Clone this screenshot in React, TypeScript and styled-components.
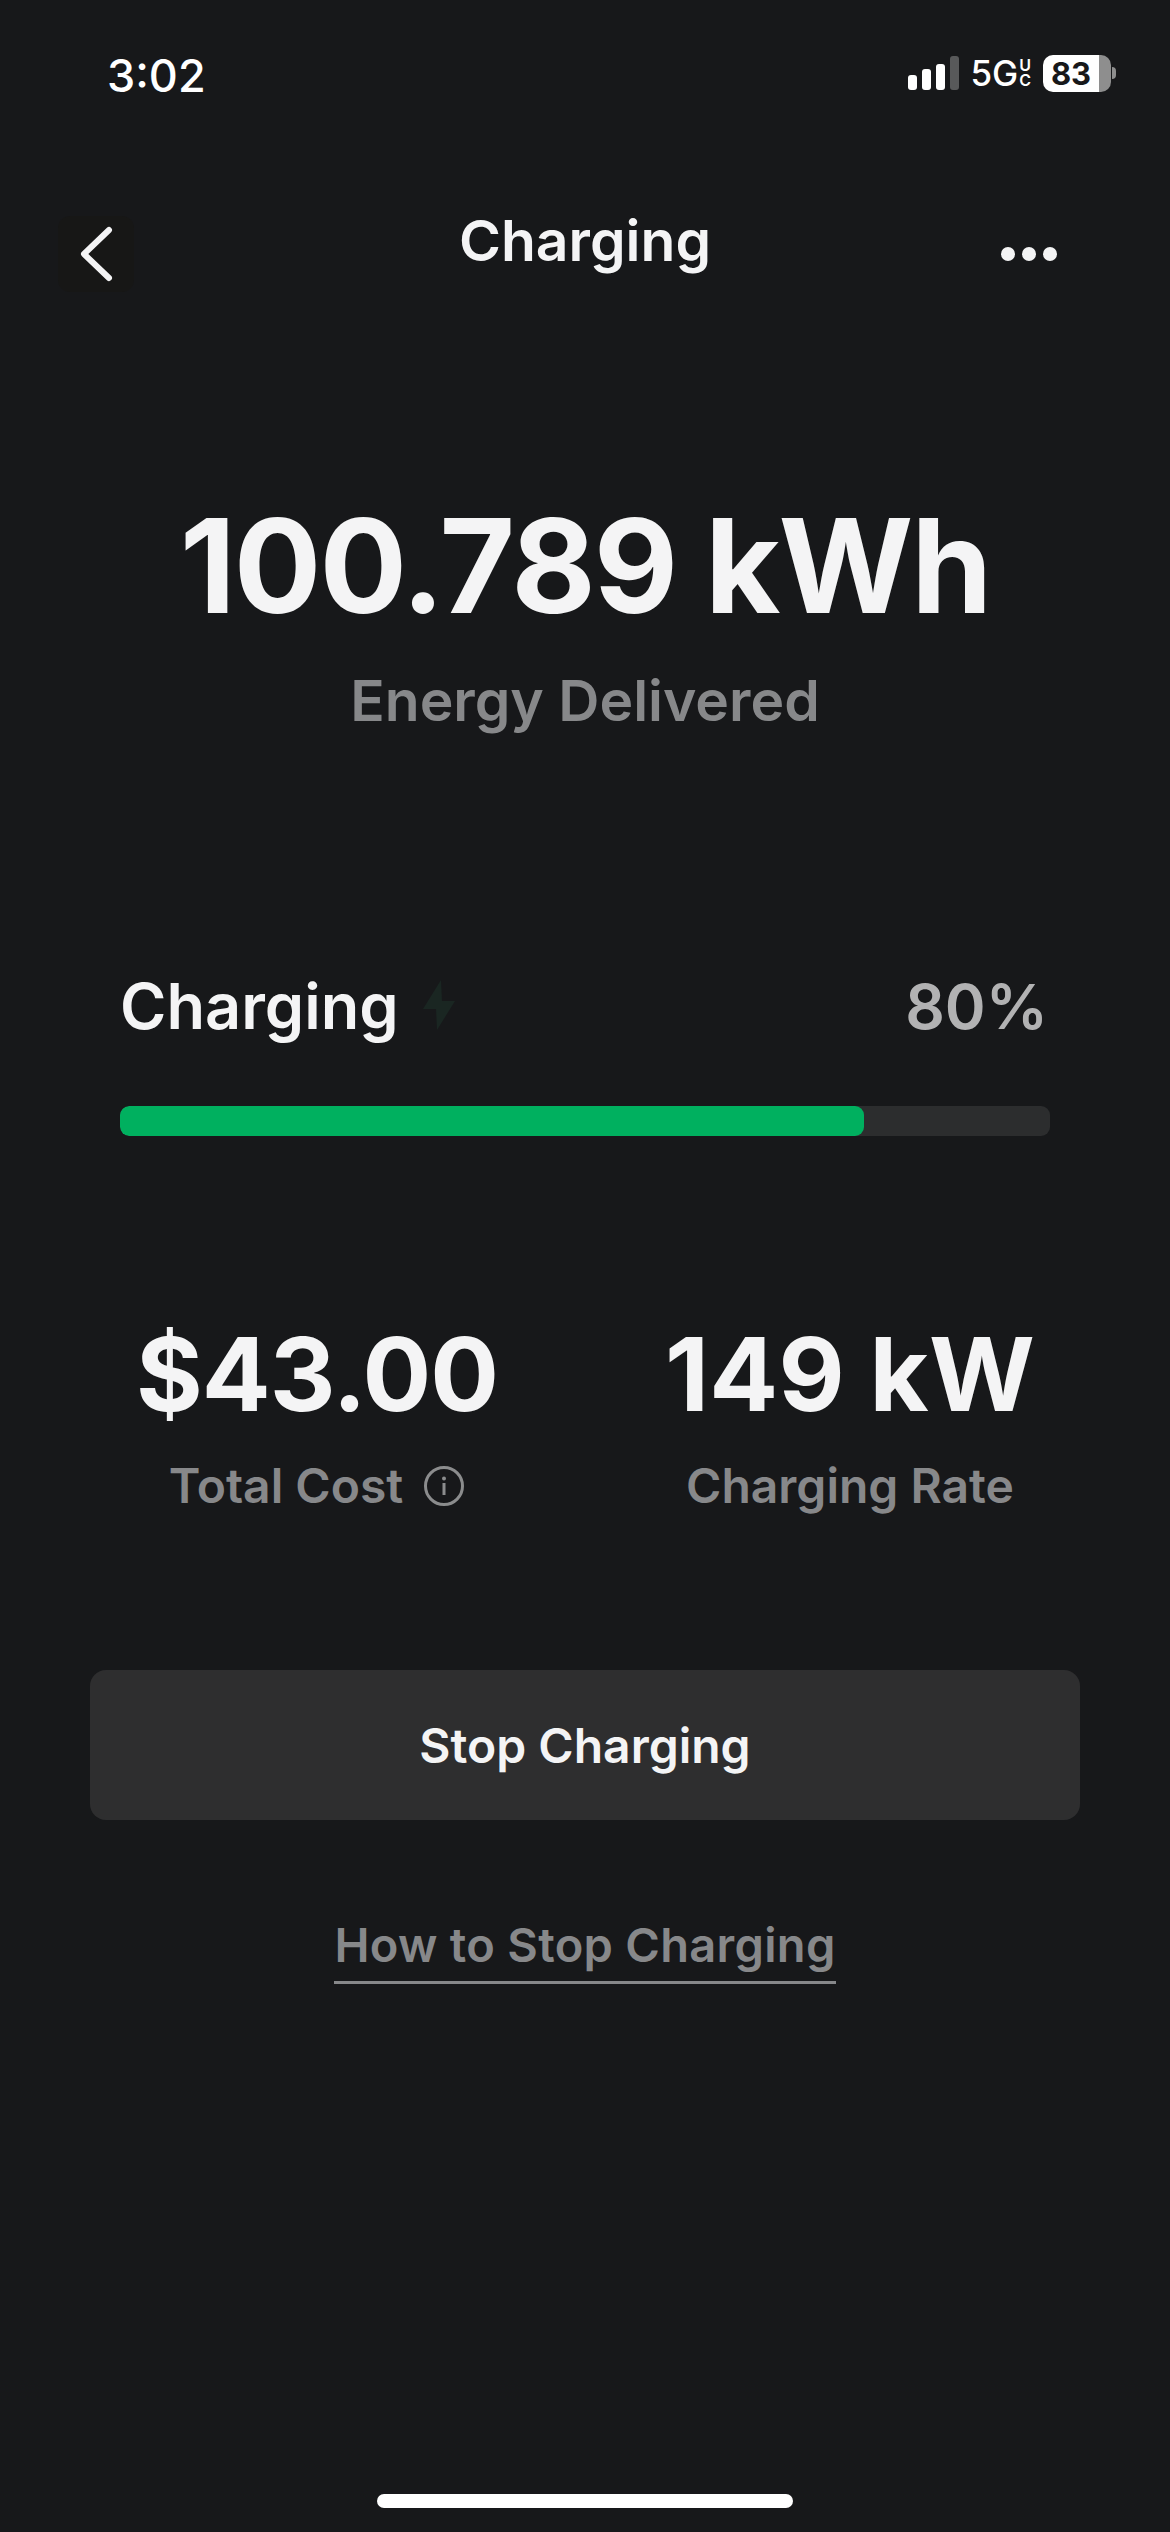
import React from 'react';
import styled, { createGlobalStyle } from 'styled-components';

const Global = createGlobalStyle`
  html, body { margin: 0; padding: 0; background: #17181a; }
  * { box-sizing: border-box; }
`;

const App = () => {
  return (
    <Screen>
      <Global />
      <StatusBar>
        <Time>3:02</Time>
        <StatusIcons>
          <Signal>
            <Bar h={15} />
            <Bar h={21} />
            <Bar h={26} />
            <Bar h={34} dim />
          </Signal>
          <Network>
            5G
            <UC>
              <span>U</span>
              <span>C</span>
            </UC>
          </Network>
          <Battery>
            <BatteryLevel>83</BatteryLevel>
            <BatteryRest />
            <BatteryTip />
          </Battery>
        </StatusIcons>
      </StatusBar>

      <Header>
        <BackBtn>
          <svg width="34" height="56" viewBox="0 0 34 56" fill="none">
            <path d="M30 4 L5 28 L30 52" stroke="#f4f4f5" strokeWidth="6" strokeLinecap="round" strokeLinejoin="round" />
          </svg>
        </BackBtn>
        <Title>Charging</Title>
        <Dots>
          <Dot />
          <Dot />
          <Dot />
        </Dots>
      </Header>

      <Hero>
        <BigValue>100.789 kWh</BigValue>
        <BigLabel>Energy Delivered</BigLabel>
      </Hero>

      <Progress>
        <ProgressHead>
          <ProgressTitle>
            Charging
            <svg width="36" height="52" viewBox="0 0 36 52">
              <path d="M20 0 L2 29 L15 29 L16 50 L34 21 L21 21 Z" fill="#1a2622" />
            </svg>
          </ProgressTitle>
          <Percent>80%</Percent>
        </ProgressHead>
        <Track>
          <Fill />
        </Track>
      </Progress>

      <Stats>
        <Stat>
          <StatValue tight>$43.00</StatValue>
          <StatLabel>
            Total Cost
            <svg width="42" height="42" viewBox="0 0 42 42" fill="none">
              <circle cx="21" cy="21" r="18.5" stroke="#8b8c8d" strokeWidth="3" />
              <circle cx="21" cy="13.5" r="2" fill="#8b8c8d" />
              <rect x="19.5" y="18" width="3" height="12" fill="#8b8c8d" />
            </svg>
          </StatLabel>
        </Stat>
        <Stat>
          <StatValue>149 kW</StatValue>
          <StatLabel>Charging Rate</StatLabel>
        </Stat>
      </Stats>

      <StopButton>Stop Charging</StopButton>
      <HowTo>How to Stop Charging</HowTo>

      <HomeIndicator />
    </Screen>
  );
};

export default App;

const Screen = styled.div`
  width: 1170px;
  height: 2532px;
  background: #17181a;
  display: flex;
  flex-direction: column;
  font-family: Inter, 'Liberation Sans', sans-serif;
  color: #f4f4f5;
  overflow: hidden;
`;

const StatusBar = styled.div`
  height: 188px;
  padding: 51px 54px 0 107px;
  display: flex;
  justify-content: space-between;
  align-items: flex-start;
`;

const Time = styled.div`
  font-size: 45px;
  font-weight: 500;
  line-height: 50px;
  color: #fff;
`;

const StatusIcons = styled.div`
  display: flex;
  align-items: center;
  height: 40px;
  margin-top: 2px;
`;

const Signal = styled.div`
  display: flex;
  align-items: flex-end;
  gap: 5px;
  margin-right: 11px;
`;

const Bar = styled.div<{ h: number; dim?: boolean }>`
  width: 9px;
  height: ${(p) => p.h}px;
  border-radius: 3px;
  background: ${(p) => (p.dim ? '#58595a' : '#ffffff')};
`;

const Network = styled.div`
  display: flex;
  align-items: center;
  font-size: 35px;
  font-weight: 500;
  color: #fff;
  margin-right: 12px;
`;

const UC = styled.div`
  display: flex;
  flex-direction: column;
  margin-left: 1px;
  font-size: 16px;
  font-weight: 600;
  line-height: 15px;
`;

const Battery = styled.div`
  display: flex;
  align-items: center;
`;

const BatteryLevel = styled.div`
  width: 56px;
  height: 37px;
  border-radius: 10px 0 0 10px;
  background: #fff;
  color: #17181a;
  font-size: 31px;
  font-weight: 700;
  line-height: 37px;
  text-align: center;
`;

const BatteryRest = styled.div`
  width: 12px;
  height: 37px;
  border-radius: 0 10px 10px 0;
  background: #8e8e8e;
`;

const BatteryTip = styled.div`
  width: 4px;
  height: 12px;
  margin-left: 1px;
  background: #8e8e8e;
  border-radius: 0 4px 4px 0;
`;

const Header = styled.div`
  height: 124px;
  padding: 0 113px 0 58px;
  display: flex;
  align-items: center;
  justify-content: space-between;
  position: relative;
`;

const BackBtn = styled.div`
  width: 76px;
  height: 76px;
  background: #171716;
  border-radius: 12px;
  display: flex;
  align-items: center;
  justify-content: center;
  margin-top: 8px;
`;

const Title = styled.div`
  position: absolute;
  left: 0;
  right: 0;
  top: 19px;
  text-align: center;
  font-size: 57px;
  font-weight: 600;
  line-height: 68px;
`;

const Dots = styled.div`
  display: flex;
  gap: 7px;
  margin-top: 8px;
  margin-right: 0;
`;

const Dot = styled.span`
  width: 14px;
  height: 14px;
  border-radius: 50%;
  background: #f4f4f5;
`;

const Hero = styled.div`
  margin-top: 179px;
  display: flex;
  flex-direction: column;
  align-items: center;
`;

const BigValue = styled.div`
  font-size: 130px;
  font-weight: 700;
  line-height: 150px;
  letter-spacing: -2px;
`;

const BigLabel = styled.div`
  margin-top: 25px;
  font-size: 57px;
  font-weight: 600;
  line-height: 70px;
  color: #87888a;
`;

const Progress = styled.div`
  margin-top: 236px;
  padding: 0 120px;
`;

const ProgressHead = styled.div`
  display: flex;
  justify-content: space-between;
  align-items: center;
  height: 70px;
`;

const ProgressTitle = styled.div`
  display: flex;
  align-items: center;
  gap: 22px;
  font-size: 63px;
  font-weight: 600;
  margin-top: -2px;
`;

const Percent = styled.div`
  font-size: 62px;
  font-weight: 600;
  color: #b2b2b3;
  margin-right: 2px;
  margin-top: -2px;
`;

const Track = styled.div`
  margin-top: 64px;
  height: 30px;
  border-radius: 9px;
  background: #2c2d2e;
  overflow: hidden;
`;

const Fill = styled.div`
  width: 80%;
  height: 100%;
  border-radius: 9px;
  background: #00b05f;
`;

const Stats = styled.div`
  margin-top: 178px;
  padding-left: 30px;
  display: grid;
  grid-template-columns: 574px 492px;
`;

const Stat = styled.div`
  display: flex;
  flex-direction: column;
  align-items: center;
`;

const StatValue = styled.div<{ tight?: boolean }>`
  font-size: 102px;
  font-weight: 700;
  line-height: 120px;
  letter-spacing: ${(p) => (p.tight ? '-1px' : '0.3px')};
`;

const StatLabel = styled.div`
  margin-top: 22px;
  display: flex;
  align-items: center;
  gap: 20px;
  font-size: 48px;
  font-weight: 600;
  line-height: 60px;
  color: #87888a;
`;

const StopButton = styled.div`
  margin: 154px 90px 0;
  height: 150px;
  background: #2e2e2f;
  border-radius: 16px;
  display: flex;
  align-items: center;
  justify-content: center;
  font-size: 48px;
  font-weight: 600;
`;

const HowTo = styled.div`
  margin: 97px auto 0;
  padding-bottom: 8px;
  font-size: 47px;
  font-weight: 600;
  line-height: 56px;
  letter-spacing: 0.3px;
  color: #87888a;
  border-bottom: 3px solid #87888a;
`;

const HomeIndicator = styled.div`
  margin: auto auto 24px;
  width: 416px;
  height: 14px;
  border-radius: 7px;
  background: #fff;
`;
